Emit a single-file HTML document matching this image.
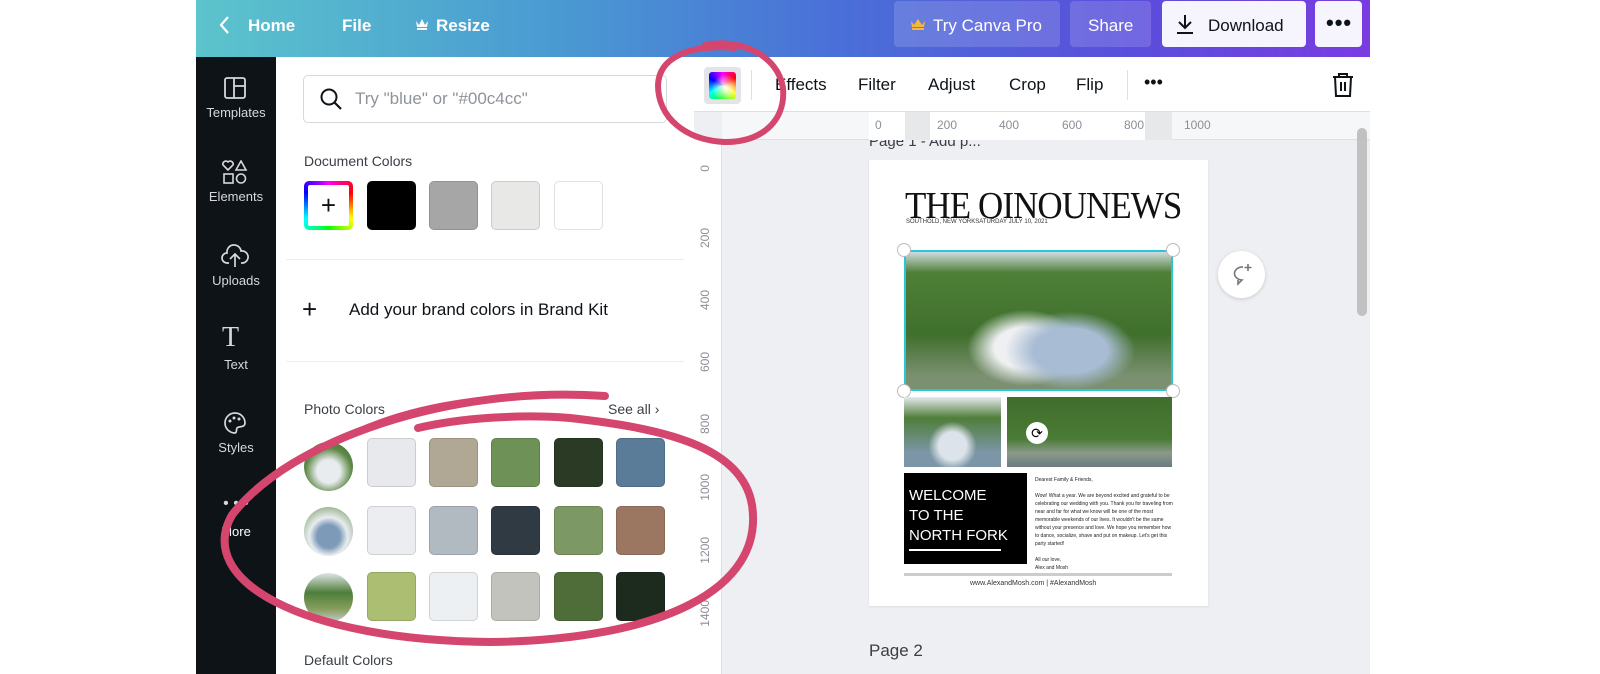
<!DOCTYPE html>
<html><head><meta charset="utf-8"><style>
*{box-sizing:border-box;margin:0;padding:0}
body{width:1600px;height:674px;background:#fff;position:relative;overflow:hidden;font-family:"Liberation Sans",sans-serif;}
.a{position:absolute}
.top{left:196px;top:0;width:1174px;height:57px;background:linear-gradient(90deg,#5cc4cc 0%,#4a9bd2 30%,#4a6fd8 55%,#5a4edc 80%,#7a3ce0 100%)}
.tt{color:#fff;font-size:17px;font-weight:bold;top:16px}
.btn{border-radius:4px;height:46px;top:1px}
.side{left:196px;top:57px;width:80px;height:617px;background:#0e1318}
.si{width:80px;text-align:center;color:#d6d8db;font-size:13px}
.panel{left:276px;top:57px;width:418px;height:617px;background:#fff}
.sw{width:49px;height:49px;border-radius:5px;border:1px solid rgba(0,0,0,.12)}
.canvas{left:694px;top:112px;width:676px;height:562px;background:#edeff2}
.tb{left:694px;top:57px;width:676px;height:55px;background:#fff;border-bottom:1px solid #dcdfe3}
.tbt{font-size:17px;color:#0e1318;top:75px}
.rn{font-size:12px;color:#8a8f96;top:118px}
</style></head><body>
<div class="a top"></div>
<svg class="a" style="left:218px;top:14px" width="14" height="22"><path d="M10 3 L3 11 L10 19" stroke="#fff" stroke-width="2.2" fill="none"/></svg>
<div class="a tt" style="left:248px">Home</div>
<div class="a tt" style="left:342px">File</div>
<div class="a tt" style="left:436px">Resize</div>
<svg class="a" style="left:415px;top:17px" width="14" height="14"><path d="M1 4 L4 8 L7 2 L10 8 L13 4 L12 10 L2 10Z" fill="#fff"/><rect x="2" y="11" width="10" height="2" fill="#fff"/></svg>
<div class="a btn" style="left:894px;width:166px;background:rgba(255,255,255,.15)"></div>
<svg class="a" style="left:910px;top:17px" width="16" height="14"><path d="M1 4 L4 8 L8 2 L12 8 L15 4 L14 10 L2 10Z" fill="#f5b83d"/><rect x="2" y="11" width="12" height="2" fill="#f5b83d"/></svg>
<div class="a tt" style="left:933px;font-weight:normal">Try Canva Pro</div>
<div class="a btn" style="left:1070px;width:81px;background:rgba(255,255,255,.15)"></div>
<div class="a tt" style="left:1088px;font-weight:normal">Share</div>
<div class="a btn" style="left:1162px;width:144px;background:#f6f4fd"></div>
<svg class="a" style="left:1174px;top:13px" width="22" height="22"><path d="M11 2 V15 M5 9 L11 15 L17 9 M3 20 H19" stroke="#0e1318" stroke-width="2" fill="none"/></svg>
<div class="a tt" style="left:1208px;color:#0e1318;font-weight:normal">Download</div>
<div class="a btn" style="left:1315px;width:47px;background:#f6f4fd"></div>
<div class="a tt" style="left:1326px;color:#0e1318;top:10px;font-size:22px;letter-spacing:1px">•••</div>

<div class="a side"></div>
<svg class="a" style="left:224px;top:77px" width="22" height="22"><rect x="1" y="1" width="20" height="20" rx="2" stroke="#d6d8db" stroke-width="1.8" fill="none"/><path d="M10 1 V21 M10 9 H21" stroke="#d6d8db" stroke-width="1.8"/></svg>
<div class="a si" style="left:196px;top:105px">Templates</div>
<svg class="a" style="left:222px;top:160px" width="26" height="26"><path d="M6 10 L1 5 A3 3 0 0 1 6 2 A3 3 0 0 1 11 5Z M19 1 L24 10 H14Z" stroke="#d6d8db" stroke-width="1.6" fill="none"/><rect x="2" y="14" width="9" height="9" stroke="#d6d8db" stroke-width="1.6" fill="none"/><circle cx="19" cy="18.5" r="4.5" stroke="#d6d8db" stroke-width="1.6" fill="none"/></svg>
<div class="a si" style="left:196px;top:189px">Elements</div>
<svg class="a" style="left:221px;top:243px" width="28" height="26"><path d="M8 20 H6 A5 5 0 0 1 6 10 A7 7 0 0 1 20 8 A5.5 5.5 0 0 1 22 20 H20 M14 24 V12 M9 16 L14 11 L19 16" stroke="#d6d8db" stroke-width="1.7" fill="none"/></svg>
<div class="a si" style="left:196px;top:273px">Uploads</div>
<div class="a" style="left:222px;top:322px;font-family:'Liberation Serif',serif;color:#d6d8db;font-size:28px">T</div>
<div class="a si" style="left:196px;top:357px">Text</div>
<svg class="a" style="left:223px;top:411px" width="24" height="24"><path d="M12 2 A10 10 0 1 0 12 22 C14 22 13 19 14 17 C15 15 22 17 22 12 A10 10 0 0 0 12 2Z" stroke="#d6d8db" stroke-width="1.7" fill="none"/><circle cx="7" cy="10" r="1.5" fill="#d6d8db"/><circle cx="11" cy="7" r="1.5" fill="#d6d8db"/><circle cx="16" cy="8" r="1.5" fill="#d6d8db"/></svg>
<div class="a si" style="left:196px;top:440px">Styles</div>
<div class="a si" style="left:196px;top:495px;font-size:16px">• • •</div>
<div class="a si" style="left:196px;top:524px;color:#fff">More</div>

<div class="a panel"></div>
<div class="a" style="left:303px;top:75px;width:364px;height:48px;border:1px solid #d5d8dc;border-radius:5px"></div>
<svg class="a" style="left:319px;top:87px" width="24" height="24"><circle cx="10" cy="10" r="7.5" stroke="#0e1318" stroke-width="2" fill="none"/><path d="M15.5 15.5 L22 22" stroke="#0e1318" stroke-width="2.2"/></svg>
<div class="a" style="left:355px;top:89px;font-size:17px;color:#8f949a">Try "blue" or "#00c4cc"</div>
<div class="a" style="left:304px;top:153px;font-size:14px;color:#3a3f45">Document Colors</div>
<div class="a sw" style="left:304px;top:181px;border:none;background:conic-gradient(#f0f,#f00,#ff0,#0f0,#0ff,#00f,#f0f);padding:4px"><div style="width:41px;height:41px;background:#fff;border-radius:2px;text-align:center;font-size:26px;line-height:40px;color:#0e1318">+</div></div>
<div class="a sw" style="left:367px;top:181px;background:#000"></div>
<div class="a sw" style="left:429px;top:181px;background:#a6a6a6"></div>
<div class="a sw" style="left:491px;top:181px;background:#e8e8e6"></div>
<div class="a sw" style="left:554px;top:181px;background:#fff"></div>
<div class="a" style="left:286px;top:259px;width:398px;height:1px;background:#eceef0"></div>
<div class="a" style="left:302px;top:294px;font-size:26px;color:#0e1318;line-height:30px">+</div>
<div class="a" style="left:349px;top:300px;font-size:17px;color:#0e1318">Add your brand colors in Brand Kit</div>
<div class="a" style="left:286px;top:361px;width:398px;height:1px;background:#eceef0"></div>
<div class="a" style="left:304px;top:401px;font-size:14px;color:#3a3f45">Photo Colors</div>
<div class="a" style="left:608px;top:401px;font-size:14px;color:#3a3f45">See all ›</div>
<div class="a" style="left:304px;top:442px;width:49px;height:49px;border-radius:50%;background:radial-gradient(circle at 50% 60%,#e8ecef 0 30%,#5f8a48 60%,#3c6b2e)"></div>
<div class="a" style="left:304px;top:507px;width:49px;height:49px;border-radius:50%;background:radial-gradient(circle at 50% 60%,#7d9ab8 0 30%,#e8ecef 50%,#5f8a48)"></div>
<div class="a" style="left:304px;top:573px;width:49px;height:49px;border-radius:50%;background:linear-gradient(#dfe5e8,#4e7e3a 40%,#8aa060 75%,#c6ccd0)"></div>
<div class="a sw" style="left:367px;top:438px;background:#e7e9ec"></div>
<div class="a sw" style="left:429px;top:438px;background:#b0a794"></div>
<div class="a sw" style="left:491px;top:438px;background:#6e9157"></div>
<div class="a sw" style="left:554px;top:438px;background:#2a3a25"></div>
<div class="a sw" style="left:616px;top:438px;background:#5b7c99"></div>
<div class="a sw" style="left:367px;top:506px;background:#ecedf0"></div>
<div class="a sw" style="left:429px;top:506px;background:#b1b9c1"></div>
<div class="a sw" style="left:491px;top:506px;background:#2f3a42"></div>
<div class="a sw" style="left:554px;top:506px;background:#7c9864"></div>
<div class="a sw" style="left:616px;top:506px;background:#9b7762"></div>
<div class="a sw" style="left:367px;top:572px;background:#abbe72"></div>
<div class="a sw" style="left:429px;top:572px;background:#edf0f2"></div>
<div class="a sw" style="left:491px;top:572px;background:#c2c3bc"></div>
<div class="a sw" style="left:554px;top:572px;background:#4e6d38"></div>
<div class="a sw" style="left:616px;top:572px;background:#1d2b1e"></div>
<div class="a" style="left:304px;top:652px;font-size:14px;color:#3a3f45">Default Colors</div>

<div class="a tb"></div>
<div class="a" style="left:704px;top:67px;width:37px;height:37px;background:#e2e4e8;border-radius:4px;padding:5px"><div style="width:27px;height:27px;border-radius:3px;background:radial-gradient(circle at 60% 60%,#fff 0,rgba(255,255,255,0) 60%),conic-gradient(#f0f,#f00,#ff0,#0f0,#0ff,#00f,#f0f)"></div></div>
<div class="a" style="left:751px;top:70px;width:1px;height:30px;background:#dcdfe3"></div>
<div class="a tbt" style="left:775px">Effects</div>
<div class="a tbt" style="left:858px">Filter</div>
<div class="a tbt" style="left:928px">Adjust</div>
<div class="a tbt" style="left:1009px">Crop</div>
<div class="a tbt" style="left:1076px">Flip</div>
<div class="a" style="left:1127px;top:70px;width:1px;height:30px;background:#dcdfe3"></div>
<div class="a tbt" style="left:1144px;top:72px;font-size:18px">•••</div>
<svg class="a" style="left:1331px;top:72px" width="24" height="26"><path d="M2 5 H22 M8 5 V2 H16 V5 M4 5 L5 24 H19 L20 5 M10 10 V19 M14 10 V19" stroke="#0e1318" stroke-width="2" fill="none"/></svg>

<div class="a canvas"></div>
<div class="a" style="left:722px;top:112px;width:648px;height:28px;background:#f6f7f8;border-bottom:1px solid #dcdfe3"></div>
<div class="a" style="left:869px;top:112px;width:303px;height:28px;background:#fff"></div>
<div class="a" style="left:905px;top:112px;width:25px;height:28px;background:#e6e8ea"></div>
<div class="a" style="left:1145px;top:112px;width:27px;height:28px;background:#e6e8ea"></div>
<div class="a rn" style="left:875px">0</div><div class="a rn" style="left:937px">200</div><div class="a rn" style="left:999px">400</div><div class="a rn" style="left:1062px">600</div><div class="a rn" style="left:1124px">800</div><div class="a rn" style="left:1184px">1000</div>
<div class="a" style="left:694px;top:140px;width:28px;height:534px;background:#fff;border-right:1px solid #dcdfe3"></div>
<div class="a" style="left:698px;top:165px;font-size:12px;color:#8a8f96;writing-mode:vertical-rl;transform:rotate(180deg);line-height:14px">0</div>
<div class="a" style="left:698px;top:228px;font-size:12px;color:#8a8f96;writing-mode:vertical-rl;transform:rotate(180deg)">200</div>
<div class="a" style="left:698px;top:290px;font-size:12px;color:#8a8f96;writing-mode:vertical-rl;transform:rotate(180deg)">400</div>
<div class="a" style="left:698px;top:352px;font-size:12px;color:#8a8f96;writing-mode:vertical-rl;transform:rotate(180deg)">600</div>
<div class="a" style="left:698px;top:414px;font-size:12px;color:#8a8f96;writing-mode:vertical-rl;transform:rotate(180deg)">800</div>
<div class="a" style="left:698px;top:474px;font-size:12px;color:#8a8f96;writing-mode:vertical-rl;transform:rotate(180deg)">1000</div>
<div class="a" style="left:698px;top:537px;font-size:12px;color:#8a8f96;writing-mode:vertical-rl;transform:rotate(180deg)">1200</div>
<div class="a" style="left:698px;top:600px;font-size:12px;color:#8a8f96;writing-mode:vertical-rl;transform:rotate(180deg)">1400</div>
<div class="a" style="left:1357px;top:128px;width:10px;height:188px;background:#c1c1c1;border-radius:5px"></div>
<div class="a" style="left:869px;top:140px;font-size:15px;color:#3a3f45;height:9px;overflow:hidden;line-height:4px">Page 1 - Add p...</div>

<div class="a" style="left:869px;top:160px;width:339px;height:446px;background:#fff;box-shadow:0 1px 2px rgba(0,0,0,.08)"></div>
<div class="a" style="left:905px;top:184px;font-family:'Liberation Serif',serif;font-size:38px;color:#111;letter-spacing:-1px;transform:scaleX(.92);transform-origin:left">THE OINOUNEWS</div>
<div class="a" style="left:906px;top:219px;font-size:6px;color:#333">SOUTHOLD, NEW YORKSATURDAY JULY 10, 2021</div>
<div class="a" style="left:904px;top:250px;width:269px;height:141px;border:2px solid #29c6d6;background:radial-gradient(ellipse at 62% 72%,#a8bcd4 0 16%,rgba(0,0,0,0) 28%),radial-gradient(ellipse at 45% 70%,#eef0f2 0 15%,rgba(0,0,0,0) 28%),linear-gradient(#cfdbe0 0,#4f8038 15%,#3f6f2c 60%,#7a9070 90%)"></div>
<div class="a" style="left:897px;top:243px;width:14px;height:14px;border-radius:50%;background:#fff;border:1px solid #bbb"></div>
<div class="a" style="left:1166px;top:243px;width:14px;height:14px;border-radius:50%;background:#fff;border:1px solid #bbb"></div>
<div class="a" style="left:897px;top:384px;width:14px;height:14px;border-radius:50%;background:#fff;border:1px solid #bbb"></div>
<div class="a" style="left:1166px;top:384px;width:14px;height:14px;border-radius:50%;background:#fff;border:1px solid #bbb"></div>
<div class="a" style="left:904px;top:397px;width:97px;height:70px;background:radial-gradient(ellipse at 50% 70%,#dde3ea 0 20%,rgba(0,0,0,0) 35%),linear-gradient(#e5eaee,#4f7e3a 30%,#7c96a8 80%)"></div>
<div class="a" style="left:1007px;top:397px;width:165px;height:70px;background:linear-gradient(#3f6e2c,#4a7b35 60%,#8a9a8a 80%,#6a7a80)"></div>
<div class="a" style="left:1026px;top:422px;width:22px;height:22px;border-radius:50%;background:#fff;text-align:center;font-size:14px;line-height:22px">⟳</div>
<div class="a" style="left:904px;top:473px;width:123px;height:91px;background:#000"></div>
<div class="a" style="left:909px;top:486px;color:#fff;font-size:15px;line-height:20px">WELCOME<br>TO THE<br>NORTH FORK</div>
<div class="a" style="left:909px;top:549px;width:92px;height:2px;background:#fff"></div>
<div class="a" style="left:1035px;top:476px;font-size:5px;line-height:8px;color:#222;width:140px">Dearest Family &amp; Friends,<br><br>Wow! What a year. We are beyond excited and grateful to be celebrating our wedding with you. Thank you for traveling from near and far for what we know will be one of the most memorable weekends of our lives. It wouldn't be the same without your presence and love. We hope you remember how to dance, socialize, shave and put on makeup. Let's get this party started!<br><br>All our love,<br>Alex and Mosh</div>
<div class="a" style="left:904px;top:573px;width:268px;height:3px;background:#ccc"></div>
<div class="a" style="left:970px;top:580px;font-size:7px;color:#333">www.AlexandMosh.com | #AlexandMosh</div>
<div class="a" style="left:1218px;top:251px;width:47px;height:47px;border-radius:50%;background:#fff;box-shadow:0 1px 4px rgba(0,0,0,.15)"></div>
<svg class="a" style="left:1228px;top:261px" width="28" height="28"><path d="M15 6 A8 6.5 0 1 0 14 19 L10 23 L10 19" stroke="#777" stroke-width="1.6" fill="none"/><path d="M20 3 V10 M16.5 6.5 H23.5" stroke="#777" stroke-width="1.6"/></svg>
<div class="a" style="left:869px;top:641px;font-size:17px;color:#3a3f45">Page 2</div>

<svg class="a" style="left:0;top:0" width="1600" height="674">
<g fill="none" stroke="#d5466f" stroke-linecap="round">
<path d="M705 45 C740 38 778 55 783 88 C786 122 760 143 724 142 C686 140 658 118 658 85 C659 58 688 44 735 48" stroke-width="6"/>
<path d="M605 396 C450 385 290 440 232 515 C195 580 300 640 490 642 C660 640 765 590 752 505 C742 445 660 428 570 418 C520 414 460 418 418 428" stroke-width="8"/>
<path d="M355 432 C420 402 505 392 595 396" stroke-width="5"/>
</g></svg>
</body></html>
